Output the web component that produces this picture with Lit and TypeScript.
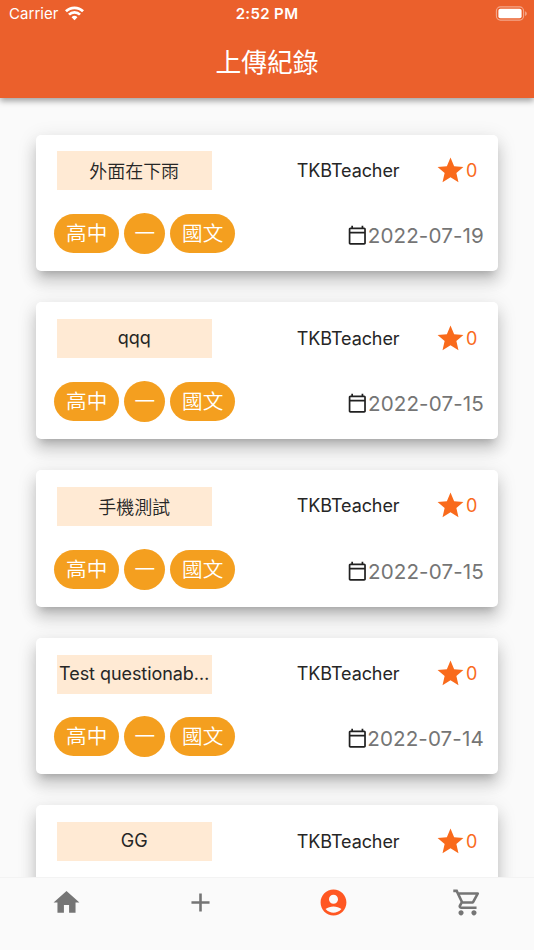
import { LitElement, html, css, svg } from "lit";
import { customElement, property } from "lit/decorators.js";

interface UploadRecord {
  title: string;
  teacher: string;
  stars: number;
  date: string;
}

const PATHS: Record<string, string> = {
  star: "M12 17.27 18.18 21l-1.64-7.03L22 9.24l-7.19-.61L12 2 9.19 8.63 2 9.24l5.46 4.73L5.82 21z",
  calendar:
    "M20 3h-1V1h-2v2H7V1H5v2H4c-1.1 0-2 .9-2 2v16c0 1.1.9 2 2 2h16c1.1 0 2-.9 2-2V5c0-1.1-.9-2-2-2zm0 18H4V10h16v11zm0-13H4V5h16v3z",
  home: "M10 20v-6h4v6h5v-8h3L12 3 2 12h3v8z",
  add: "M19 13h-6v6h-2v-6H5v-2h6V5h2v6h6v2z",
  account:
    "M12 2C6.48 2 2 6.48 2 12s4.48 10 10 10 10-4.48 10-10S17.52 2 12 2zm0 4c1.93 0 3.5 1.57 3.5 3.5S13.93 13 12 13s-3.5-1.57-3.5-3.5S10.07 6 12 6zm0 14c-2.03 0-4.43-.82-6.14-2.88C7.55 15.8 9.68 15 12 15s4.45.8 6.14 2.12C16.43 19.18 14.03 20 12 20z",
  cart: "M15.55 13c.75 0 1.41-.41 1.75-1.03l3.58-6.49c.37-.66-.11-1.48-.87-1.48H5.21l-.94-2H1v2h2l3.6 7.59-1.35 2.44C4.52 15.37 5.48 17 7 17h12v-2H7l1.1-2h7.45zM6.16 6h12.15l-2.76 5H8.53L6.16 6zM7 18c-1.1 0-1.99.9-1.99 2S5.9 22 7 22s2-.9 2-2-.9-2-2-2zm10 0c-1.1 0-1.99.9-1.99 2s.89 2 1.99 2 2-.9 2-2-.9-2-2-2z",
};

const icon = (name: string) =>
  html`<svg viewBox="0 0 24 24" fill="currentColor" aria-hidden="true">${svg`<path d=${PATHS[name]}></path>`}</svg>`;

@customElement("record-card")
class RecordCard extends LitElement {
  @property({ attribute: false }) record!: UploadRecord;

  static styles = css`
    :host {
      display: flex;
      flex-direction: column;
      box-sizing: border-box;
      height: 136.7px;
      padding: 16.9px 14px 0 18px;
      background: #fff;
      border-radius: 5px;
      box-shadow: 0 7px 8px -5px rgba(0, 0, 0, 0.2), 0 11px 15px 1px rgba(0, 0, 0, 0.14),
        0 4px 19px 2px rgba(0, 0, 0, 0.09);
      color: #262626;
    }
    svg { display: block; flex: none; }
    .top, .bottom, .rating, .tags, .date { display: flex; align-items: center; }
    .top { height: 39px; }
    .title {
      box-sizing: border-box;
      width: 155px;
      height: 39px;
      margin-left: 2.5px;
      line-height: 37px;
      text-align: center;
      background: #ffead4;
      font-size: 18px;
      letter-spacing: -0.06px;
      white-space: nowrap;
    }
    .title.cjk { line-height: 41px; font-weight: 350; }
    .teacher {
      width: 138.2px;
      margin-left: 85px;
      margin-top: -1px;
      font-size: 18px;
      letter-spacing: -0.08px;
    }
    .rating { color: #f96a1b; font-size: 18px; margin-top: -1px; }
    .rating svg { width: 31px; height: 31px; }
    .bottom { height: 42px; margin-top: 22.4px; justify-content: space-between; }
    .tags { gap: 5px; }
    .tag {
      box-sizing: border-box;
      height: 39px;
      line-height: 40px;
      width: 65px;
      text-align: center;
      border-radius: 20px;
      background: #f49f1f;
      color: #fff;
      font-size: 20.6px;
      font-weight: 350;
      white-space: nowrap;
    }
    .round { width: 41px; height: 41px; line-height: 42px; border-radius: 50%; }
    .date { color: #757575; font-size: 20.6px; letter-spacing: 0.1px; padding-top: 3.6px; }
    .date svg { width: 20.6px; height: 20.6px; color: #212121; }
  `;

  render() {
    const r = this.record;
    const cjk = /[\u4e00-\u9fff]/.test(r.title);
    return html`
      <div class="top">
        <div class="title ${cjk ? "cjk" : ""}">${r.title}</div>
        <div class="teacher">${r.teacher}</div>
        <div class="rating">${icon("star")}<span>${r.stars}</span></div>
      </div>
      <div class="bottom">
        <div class="tags">
          <span class="tag">高中</span><span class="tag round">一</span><span class="tag">國文</span>
        </div>
        <div class="date">${icon("calendar")}<span>${r.date}</span></div>
      </div>
    `;
  }
}

@customElement("app-root")
class AppRoot extends LitElement {
  static styles = css`
    :host {
      display: flex;
      flex-direction: column;
      height: 950px;
      overflow: hidden;
      background: #fafafa;
      font-family: Inter, "Noto Sans CJK TC", sans-serif;
    }
    svg { display: block; }
    header {
      flex: none;
      height: 98px;
      background: #eb602c;
      color: #fff;
      box-shadow: 0 3px 6px rgba(0, 0, 0, 0.36);
      z-index: 1;
    }
    .status {
      display: grid;
      grid-template-columns: 1fr auto 1fr;
      align-items: center;
      height: 27px;
      padding: 0 7px 0 9px;
      font-size: 15px;
    }
    .carrier { display: flex; align-items: center; gap: 6px; letter-spacing: 0.05px; }
    .wifi { width: 19px; height: 15px; }
    .clock { font-weight: 600; letter-spacing: 0.35px; margin-right: 2px; }
    .battery { width: 32px; height: 15px; justify-self: end; }
    h1 {
      margin: 0;
      height: 71px;
      line-height: 71px;
      text-align: center;
      font-size: 25.8px;
      font-weight: 400;
    }
    main {
      flex: 1;
      min-height: 0;
      overflow: hidden;
      display: flex;
      flex-direction: column;
      gap: 31px;
      padding: 36.6px 36.2px 0;
    }
    record-card { flex: none; }
    nav {
      flex: none;
      box-sizing: border-box;
      height: 73px;
      padding-top: 9px;
      display: grid;
      grid-template-columns: repeat(4, 1fr);
      justify-items: center;
      align-items: start;
      background: #fafafa;
      border-top: 1px solid #f3f3f3;
      color: #757575;
      z-index: 1;
    }
    nav svg { width: 31px; height: 31px; }
    .active { color: #ff5722; }
  `;

  private records: UploadRecord[] = [
    { title: "外面在下雨", teacher: "TKBTeacher", stars: 0, date: "2022-07-19" },
    { title: "qqq", teacher: "TKBTeacher", stars: 0, date: "2022-07-15" },
    { title: "手機測試", teacher: "TKBTeacher", stars: 0, date: "2022-07-15" },
    { title: "Test questionab…", teacher: "TKBTeacher", stars: 0, date: "2022-07-14" },
    { title: "GG", teacher: "TKBTeacher", stars: 0, date: "2022-07-14" },
  ];

  render() {
    return html`
      <header>
        <div class="status">
          <div class="carrier">
            <span>Carrier</span>
            <svg class="wifi" viewBox="0 0 20 15" fill="none" stroke="#fff" stroke-width="2.9">
              <path d="M1 5.2a12.8 12.8 0 0 1 18 0"></path>
              <path d="M4.2 8.7a8.2 8.2 0 0 1 11.6 0"></path>
              <path d="M10 14.6 6.9 11.5a4.4 4.4 0 0 1 6.2 0z" fill="#fff" stroke="none"></path>
            </svg>
          </div>
          <span class="clock">2:52 PM</span>
          <svg class="battery" viewBox="0 0 32 15" fill="none">
            <rect x="1.4" y=".9" width="27.2" height="13.2" rx="4" stroke="#fff" stroke-opacity=".45" stroke-width="1.1"></rect>
            <rect x="3.4" y="2.8" width="23.2" height="9.4" rx="2" fill="#fff"></rect>
            <path d="M30.2 5.2c2 .8 2 4 0 4.8z" fill="#fff" fill-opacity=".5"></path>
          </svg>
        </div>
        <h1>上傳紀錄</h1>
      </header>
      <main>${this.records.map((r) => html`<record-card .record=${r}></record-card>`)}</main>
      <nav>
        <span>${icon("home")}</span>
        <span>${icon("add")}</span>
        <span class="active">${icon("account")}</span>
        <span>${icon("cart")}</span>
      </nav>
    `;
  }
}
